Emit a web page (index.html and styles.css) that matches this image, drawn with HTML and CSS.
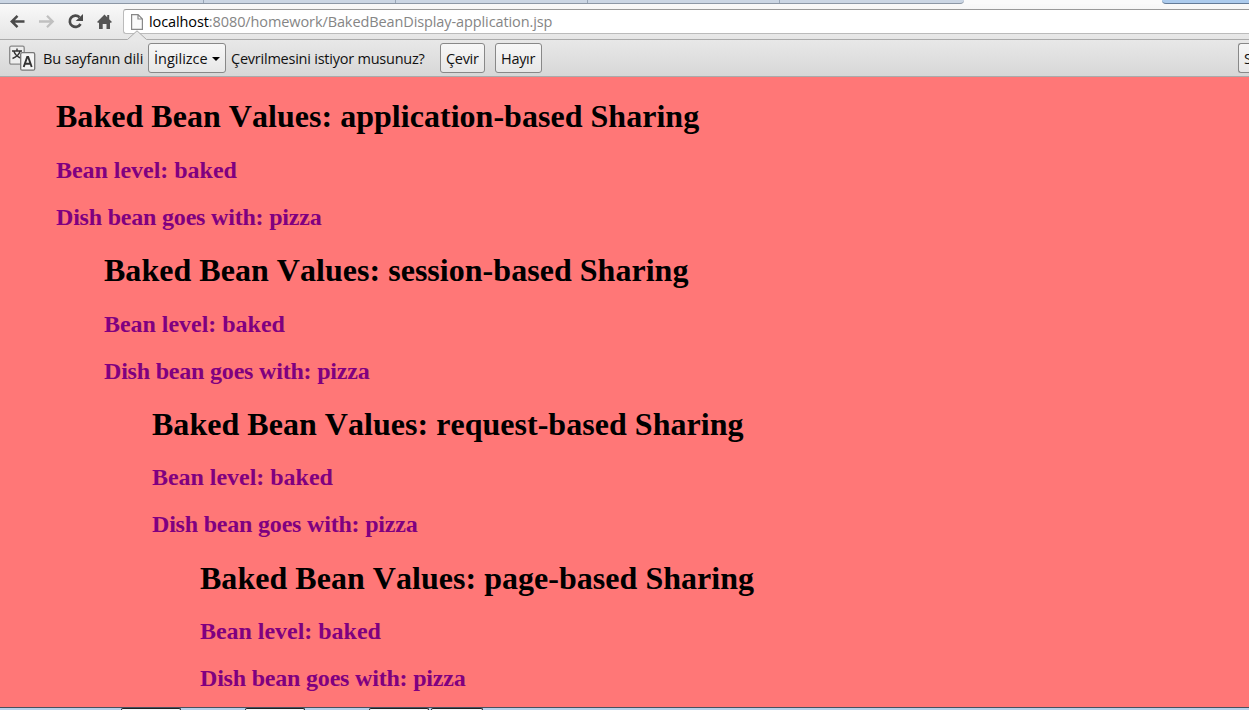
FILE: index.html
```html
<!DOCTYPE html>
<html lang="tr">
<head>
<meta charset="utf-8">
<title>Baked Bean Values</title>
<link rel="stylesheet" href="styles.css">
</head>
<body>
<div class="tabs"><div class="background-tabs"><i></i><i></i><i></i><i></i><i></i></div><div class="window-edge"></div></div>
<header class="toolbar">
  <svg class="nav" width="123" height="35" viewBox="0 4 123 35">
    <path d="M24.500 21.500H12M17.500 15.800l-5.700 5.700 5.700 5.700" fill="none" stroke="#4b4b4b" stroke-width="2.500"/>
    <path d="M39 21.500H52M47 15.800l5.700 5.700-5.700 5.700" fill="none" stroke="#c0c0c0" stroke-width="2.300"/>
    <path d="M79.500 17.200a5.700 5.700 0 1 0 1 6.800" fill="none" stroke="#4b4b4b" stroke-width="2.700"/>
    <path d="M83 14v7h-7.300z" fill="#4b4b4b"/>
    <path d="M97 22l7.500-7.500 2.700 2.700V15h2v4.200L112 22l-1 .8h-1V29h-3.500v-5h-3.800v5H99v-6.200h-1z" fill="#555"/>
  </svg>
  <div class="address">
    <svg class="page-icon" width="12" height="16" viewBox="0 0 12 16"><path d="M.6.6h6.500l4.300 4.400v10.400H.6zM7 .8V5h4.200" fill="#fafafa" stroke="#888" stroke-width="1.200"/></svg>
    <span class="url"><b>localhost</b>:8080/homework/BakedBeanDisplay-application.jsp</span>
  </div>
</header>
<div class="infobar">
  <svg class="notch" width="20" height="10" viewBox="0 0 20 10"><path d="M0 10L10 .8 20 10z" fill="#e8e8e8"/><path d="M.5 9.500L10 .8l9.500 8.700" fill="none" stroke="#aaa"/></svg>
  <svg class="translate" width="27" height="27" viewBox="0 0 27 27">
    <rect x=".7" y="1.200" width="14.500" height="18" rx="1.500" fill="#eee" stroke="#888" stroke-width="1.300"/>
    <path d="M3 6h10M8 3.500V6M5 6.500c1 3 3.500 5.500 7.500 7M11 6.500c-1 3-3.500 5.500-7.500 7" fill="none" stroke="#333" stroke-width="1.400"/>
    <rect x="11.700" y="7.700" width="14" height="17.500" rx="1.500" fill="#f5f5f5" stroke="#777" stroke-width="1.300"/>
    <path d="M14.700 22l3.500-10h1l3.500 10M16 18.800h5.500" fill="none" stroke="#333" stroke-width="1.900"/>
  </svg>
  <span class="label language-label">Bu sayfanın dili</span>
  <button class="button language"><span>İngilizce</span><svg width="8" height="4"><path d="M0 0h8L4 4z"/></svg></button>
  <span class="label question">Çevrilmesini istiyor musunuz?</span>
  <button class="button translate-button"><span>Çevir</span></button>
  <button class="button no-button"><span>Hayır</span></button>
  <button class="button options"><span>S</span></button>
</div>
<main class="page">
  <section class="scope">
    <h1 class="title">Baked Bean Values: application-based Sharing</h1>
    <h2 class="level">Bean level: baked</h2>
    <h2 class="dish">Dish bean goes with: pizza</h2>
  </section>
  <section class="scope">
    <h1 class="title">Baked Bean Values: session-based Sharing</h1>
    <h2 class="level">Bean level: baked</h2>
    <h2 class="dish">Dish bean goes with: pizza</h2>
  </section>
  <section class="scope">
    <h1 class="title">Baked Bean Values: request-based Sharing</h1>
    <h2 class="level">Bean level: baked</h2>
    <h2 class="dish">Dish bean goes with: pizza</h2>
  </section>
  <section class="scope">
    <h1 class="title">Baked Bean Values: page-based Sharing</h1>
    <h2 class="level">Bean level: baked</h2>
    <h2 class="dish">Dish bean goes with: pizza</h2>
  </section>
</main>
<footer class="taskbar"><i></i><i></i><i></i><i></i></footer>
</body>
</html>
```
FILE: styles.css
```css
* { box-sizing: border-box; }
body {
  margin: 0;
  height: 710px;
  overflow: hidden;
  display: flex;
  flex-direction: column;
  background: #ff7777;
  font-family: "Liberation Serif", serif;
}
.tabs { height: 4px; flex: none; display: flex; justify-content: space-between; background: #fafafa; }
.background-tabs { width: 964px; display: flex; background: #cbd6e4; border-bottom: 1px solid #8c97a5; border-radius: 0 0 5px 0; }
.background-tabs i { width: 192px; flex: none; border-right: 1px solid #99a7b8; border-radius: 0 0 0 3px; }
.background-tabs i:first-child { width: 204px; }
.background-tabs i:last-child { width: 184px; border: 0; }
.window-edge { width: 87px; background: #accbed; border-bottom: 1px solid #647b97; border-radius: 0 0 0 4px; }
.toolbar { height: 35px; flex: none; display: flex; background: linear-gradient(#f9f9f9, #e5e5e5); }
.nav { flex: none; }
.address {
  flex: 1;
  height: 25px;
  margin-top: 5px;
  padding-left: 7px;
  display: flex;
  align-items: center;
  background: #fff;
  border: 1px solid #bbb;
  border-top-color: #999;
  border-right: 0;
  border-radius: 3px 0 0 3px;
}
.page-icon { flex: none; margin-right: 6px; }
.url { font: 14.5px/20px "Open Sans", sans-serif; color: #858585; letter-spacing: -0.1px; white-space: nowrap; }
.url b { font-weight: 400; color: #000; }
.infobar {
  position: relative;
  height: 38px;
  flex: none;
  display: flex;
  align-items: center;
  padding-left: 9px;
  background: linear-gradient(#e8e8e8, #d7d7d7);
  border-top: 1px solid #aaa;
  border-bottom: 1px solid #aaa;
  font: 14.5px/20px "Open Sans", sans-serif;
  color: #111;
}
.notch { position: absolute; left: 127px; top: -10px; }
.translate { flex: none; }
.label { flex: none; padding-top: 1px; white-space: nowrap; }
.language-label { width: 105px; margin-left: 7px; letter-spacing: -0.13px; }
.question { width: 209px; margin-left: 5px; letter-spacing: -0.23px; }
.button {
  height: 30px;
  flex: none;
  padding: 1px 5px 0;
  display: flex;
  align-items: center;
  justify-content: space-between;
  background: linear-gradient(#f7f7f7, #e7e7e7);
  border: 1px solid #888;
  border-radius: 3px;
  font: inherit;
  color: #111;
  letter-spacing: -0.3px;
  white-space: nowrap;
}
.language { width: 78px; letter-spacing: 0; }
.translate-button { width: 45px; }
.no-button { width: 47px; margin-left: 10px; }
.options { width: 11px; margin-left: 696px; padding: 1px 0 0 5px; overflow: hidden; border-right: 0; border-radius: 3px 0 0 3px; }
.page { flex: 1; min-height: 0; overflow: hidden; padding: 21.44px 0 0 56px; background: #ff7777; }
.scope { height: 153.8px; }
.scope:nth-child(2) { margin-left: 48px; }
.scope:nth-child(3) { margin-left: 96px; }
.scope:nth-child(4) { margin-left: 144px; }
.title { margin: 0 0 21.44px; font-size: 32px; line-height: 37px; font-kerning: none; letter-spacing: 0.03px; color: #000; }
.level, .dish { margin: 0 0 19.92px; font-size: 24px; line-height: 27px; color: #800080; }
.level { letter-spacing: -0.03px; }
.dish { letter-spacing: -0.2px; }
.taskbar { height: 3px; flex: none; display: flex; padding-left: 121px; background: #b9d0ea; border-top: 1px solid #46515e; }
.taskbar i { width: 60px; background: #f4f7fb; border: 1px solid #222; border-bottom: 0; border-radius: 2px 2px 0 0; margin-right: 64px; }
.taskbar i:nth-child(3) { margin-right: 2px; }
.taskbar i:last-child { width: 52px; }
```
